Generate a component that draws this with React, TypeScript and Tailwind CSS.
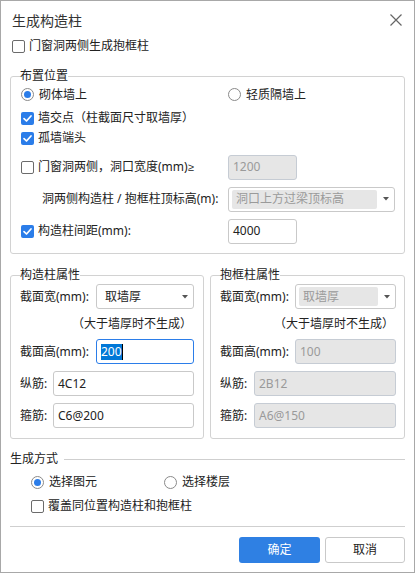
import React from "react";

function Check({ checked }: { checked?: boolean }) {
  return checked ? (
    <span className="w-[13px] h-[13px] rounded-[2px] bg-[#2b7de9] flex items-center justify-center shrink-0">
      <svg width="11" height="11" viewBox="0 0 11 11">
        <path d="M2 5.6 L4.5 8 L9 3" stroke="white" strokeWidth="1.7" fill="none" strokeLinecap="round" strokeLinejoin="round" />
      </svg>
    </span>
  ) : (
    <span className="w-[13px] h-[13px] rounded-[2px] border border-[#6b6b6b] bg-white shrink-0" />
  );
}

function Radio({ checked }: { checked?: boolean }) {
  return (
    <span className="w-[13px] h-[13px] rounded-full border border-[#8a8a8a] bg-white flex items-center justify-center shrink-0">
      {checked && <span className="w-[7px] h-[7px] rounded-full bg-[#2b7de9]" />}
    </span>
  );
}

function Arrow() {
  return (
    <svg width="6" height="4" viewBox="0 0 6 4" className="shrink-0">
      <path d="M0 0 L6 0 L3 3.5 Z" fill="#555" />
    </svg>
  );
}

function Field({ value, disabled, className }: { value: string; disabled?: boolean; className: string }) {
  return (
    <div
      className={
        disabled
          ? "h-[25px] border border-[#c6ccd4] rounded-[3px] bg-[#e6e6e6] text-[#9a9a9a] px-[4px] flex items-center " + className
          : "h-[25px] border border-[#c9c9c9] rounded-[3px] bg-white text-[#222] px-[4px] flex items-center " + className
      }
    >
      {value}
    </div>
  );
}

function Select({ value, disabled, className }: { value: string; disabled?: boolean; className: string }) {
  return (
    <div className={"h-[25px] border border-[#c9c9c9] rounded-[3px] bg-white flex items-center pl-[3px] pr-[5px] gap-[6px] " + className}>
      {disabled ? (
        <div className="flex-1 h-[19px] rounded-[2px] bg-[#e6e6e6] text-[#9a9a9a] flex items-center px-[4px]">{value}</div>
      ) : (
        <div className="flex-1 h-[19px] text-[#222] flex items-center px-[5px]">{value}</div>
      )}
      <Arrow />
    </div>
  );
}

export default function App() {
  return (
    <div className="w-[415px] h-[573px] border border-[#a8a8a8] bg-white text-[12px] text-[#222] font-['Noto_Sans','Noto_Sans_CJK_SC',sans-serif] flex flex-col overflow-hidden">
      {/* title bar */}
      <div className="h-[38px] flex items-center justify-between pl-[11px] pr-[12px]">
        <span className="text-[14px] text-[#333]">生成构造柱</span>
        <svg width="12" height="12" viewBox="0 0 12 12">
          <path d="M0.5 0.5 L11.5 11.5 M11.5 0.5 L0.5 11.5" stroke="#666" strokeWidth="1.2" />
        </svg>
      </div>

      <div className="h-[14px] flex items-center gap-[4px] pl-[11px]">
        <Check />
        <span>门窗洞两侧生成抱框柱</span>
      </div>

      <div className="flex flex-col px-[9px]">
        {/* 布置位置 */}
        <fieldset className="mt-[15px] border border-[#d2d2d2] rounded-[3px] pl-[10px] pr-[9px] pb-[9px]">
          <legend className="leading-[16px] -ml-[1px]">布置位置</legend>
          <div className="h-[21px] flex items-center">
            <div className="w-[207px] flex items-center gap-[5px]">
              <Radio checked />
              <span>砌体墙上</span>
            </div>
            <div className="flex items-center gap-[5px]">
              <Radio />
              <span>轻质隔墙上</span>
            </div>
          </div>
          <div className="h-[26px] flex items-center gap-[4px]">
            <Check checked />
            <span>墙交点（柱截面尺寸取墙厚）</span>
          </div>
          <div className="h-[14px] flex items-center gap-[4px]">
            <Check checked />
            <span>孤墙端头</span>
          </div>
          <div className="mt-[9px] h-[26px] flex items-center">
            <div className="w-[207px] flex items-center gap-[4px]">
              <Check />
              <span>
                门窗洞两侧，洞口宽度(mm)<span className="font-['Liberation_Sans',sans-serif] text-[11px]">≥</span>
              </span>
            </div>
            <Field value="1200" disabled className="w-[69px]" />
          </div>
          <div className="mt-[6px] h-[26px] flex items-center">
            <div className="w-[207px] pl-[21px]">洞两侧构造柱 / 抱框柱顶标高(m):</div>
            <Select value="洞口上方过梁顶标高" disabled className="flex-1" />
          </div>
          <div className="mt-[6px] h-[26px] flex items-center">
            <div className="w-[207px] flex items-center gap-[4px]">
              <Check checked />
              <span>构造柱间距(mm):</span>
            </div>
            <Field value="4000" className="w-[69px]" />
          </div>
        </fieldset>

        {/* property groups */}
        <div className="mt-[13px] flex gap-[6px]">
          <fieldset className="w-[194px] border border-[#d2d2d2] rounded-[3px] pl-[9px] pr-[9px] pb-[10px]">
            <legend className="leading-[16px]">构造柱属性</legend>
            <div className="mt-[1px] h-[25px] flex items-center">
              <span className="w-[76px]">截面宽(mm):</span>
              <Select value="取墙厚" className="flex-1" />
            </div>
            <div className="h-[30px] flex items-center justify-end pr-[2px]">（大于墙厚时不生成）</div>
            <div className="h-[25px] flex items-center">
              <span className="w-[76px]">截面高(mm):</span>
              <div className="flex-1 h-[25px] border border-[#2b7de9] rounded-[3px] bg-white px-[4px] flex items-center">
                <span className="bg-[#0078d7] text-white leading-[16px]">200</span>
                <span className="w-px h-[16px] bg-black" />
              </div>
            </div>
            <div className="mt-[7px] h-[25px] flex items-center">
              <span className="w-[33px]">纵筋:</span>
              <Field value="4C12" className="flex-1" />
            </div>
            <div className="mt-[7px] h-[25px] flex items-center">
              <span className="w-[33px]">箍筋:</span>
              <Field value="C6@200" className="flex-1" />
            </div>
          </fieldset>

          <fieldset className="flex-1 border border-[#d2d2d2] rounded-[3px] pl-[9px] pr-[8px] pb-[10px]">
            <legend className="leading-[16px]">抱框柱属性</legend>
            <div className="mt-[1px] h-[25px] flex items-center">
              <span className="w-[75px]">截面宽(mm):</span>
              <Select value="取墙厚" disabled className="flex-1" />
            </div>
            <div className="h-[30px] flex items-center justify-end pr-[2px]">（大于墙厚时不生成）</div>
            <div className="h-[25px] flex items-center">
              <span className="w-[75px]">截面高(mm):</span>
              <Field value="100" disabled className="flex-1" />
            </div>
            <div className="mt-[7px] h-[25px] flex items-center">
              <span className="w-[34px]">纵筋:</span>
              <Field value="2B12" disabled className="flex-1" />
            </div>
            <div className="mt-[7px] h-[25px] flex items-center">
              <span className="w-[34px]">箍筋:</span>
              <Field value="A6@150" disabled className="flex-1" />
            </div>
          </fieldset>
        </div>

        {/* 生成方式 */}
        <div className="mt-[10px] h-[20px] flex items-center gap-[6px]">
          <span>生成方式</span>
          <div className="flex-1 h-px bg-[#cfcfcf]" />
        </div>
        <div className="mt-[3px] h-[20px] flex items-center pl-[21px]">
          <div className="w-[133px] flex items-center gap-[5px]">
            <Radio checked />
            <span>选择图元</span>
          </div>
          <div className="flex items-center gap-[5px]">
            <Radio />
            <span>选择楼层</span>
          </div>
        </div>
        <div className="mt-[4px] h-[20px] flex items-center gap-[4px] pl-[21px]">
          <Check />
          <span>覆盖同位置构造柱和抱框柱</span>
        </div>
        <div className="mt-[10px] h-px bg-[#cfcfcf]" />
        <div className="mt-[10px] flex justify-end gap-[5px]">
          <button className="w-[81px] h-[26px] rounded-[3px] bg-[#2f80e3] text-white text-[12px]">确定</button>
          <button className="w-[80px] h-[26px] rounded-[3px] border border-[#c9c9c9] bg-white text-[#222] text-[12px]">取消</button>
        </div>
      </div>
    </div>
  );
}
